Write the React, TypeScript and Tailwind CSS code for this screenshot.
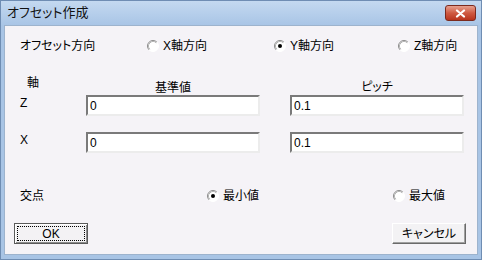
import React from 'react';

const jp = "font-['Liberation_Sans','Noto_Sans_CJK_JP',sans-serif] [font-feature-settings:'palt']";

function Radio({ checked = false }: { checked?: boolean }) {
    return (
        <svg width="12" height="12" viewBox="0 0 12 12" className="shrink-0">
            <circle cx="6" cy="6" r="5.5" fill="#ffffff" />
            <path d="M2.11 9.89 A5.5 5.5 0 0 1 9.89 2.11" fill="none" stroke="#8a8a8a" strokeWidth="1" />
            <path d="M9.89 2.11 A5.5 5.5 0 0 1 2.11 9.89" fill="none" stroke="#ffffff" strokeWidth="1" />
            <path d="M2.82 9.18 A4.5 4.5 0 0 1 9.18 2.82" fill="none" stroke="#b4b4b4" strokeWidth="1" />
            {checked && <circle cx="6" cy="6" r="2" fill="#000000" />}
        </svg>
    );
}

function RadioItem({ label, checked, className }: { label: string; checked?: boolean; className?: string }) {
    return (
        <div className={`flex items-center gap-[4px] ${className ?? ''}`}>
            <Radio checked={checked} />
            <span>{label}</span>
        </div>
    );
}

function TextBox({ value }: { value: string }) {
    return (
        <div className="h-[21px] bg-white border-2 border-t-[#7a7a7a] border-l-[#7a7a7a] border-r-[#ececec] border-b-[#ececec] flex items-center pl-[2px] text-[12px] font-['Liberation_Sans',sans-serif] text-black">
            {value}
        </div>
    );
}

export default function App() {
    return (
        <div className={`w-[482px] h-[260px] flex flex-col bg-[#a8c4e5] border border-[#6f8db3] text-black ${jp}`}>
            {/* title bar */}
            <div className="h-[24px] flex items-center justify-between pl-[6px] pr-[5px] bg-gradient-to-b from-[#c4d9f0] to-[#a9c5e6]">
                <span className="text-[13px] leading-[16px] text-[#111]">オフセット作成</span>
                <div className="w-[31px] h-[16px] rounded-[3px] border border-[#7b2a1e] bg-gradient-to-b from-[#e6a08f] via-[#cf5a42] to-[#b8331c] flex items-center justify-center">
                    <svg width="11" height="9" viewBox="0 0 11 9">
                        <path d="M2 1.5 L9 7.5 M9 1.5 L2 7.5" stroke="#ffffff" strokeWidth="2.2" strokeLinecap="round" />
                    </svg>
                </div>
            </div>

            {/* client */}
            <div className="mx-[3px] mb-[4px] flex-1 bg-[#f5f3f7] border border-[#9db3cd] px-[9px] flex flex-col text-[12px] leading-[16px]">
                <div className="mt-[12px] h-[16px] pl-[6px] flex items-center">
                    <span className="w-[127px]">オフセット方向</span>
                    <RadioItem label="X軸方向" className="w-[127px]" />
                    <RadioItem label="Y軸方向" checked className="w-[124px]" />
                    <RadioItem label="Z軸方向" />
                </div>

                <div className="mt-[25px] pl-[6px] grid grid-cols-[66px_174px_30px_174px]">
                    <div className="h-[14px] leading-[12px] pl-[7px] -mt-[2px]">軸</div>
                    <div className="h-[14px] leading-[18px] text-center">基準値</div>
                    <div />
                    <div className="h-[14px] leading-[16px] text-center">ピッチ</div>
                </div>

                <div className="mt-[2px] pl-[6px] grid grid-cols-[66px_174px_30px_174px] gap-y-[16px]">
                    <div className="h-[21px] leading-[14px] pt-[1px]">Z</div>
                    <TextBox value="0" />
                    <div />
                    <TextBox value="0.1" />
                    <div className="h-[21px] leading-[14px] pt-[1px]">X</div>
                    <TextBox value="0" />
                    <div />
                    <TextBox value="0.1" />
                </div>

                <div className="mt-[35px] h-[16px] pl-[6px] flex items-center">
                    <span className="w-[187px]">交点</span>
                    <RadioItem label="最小値" checked className="w-[186px]" />
                    <RadioItem label="最大値" />
                </div>

                <div className="mt-[19px] flex justify-between pr-[2px]">
                    <button className="w-[74px] h-[21px] border border-[#5a5a5a] bg-[#f3f2f4] p-[2px] shadow-[inset_1px_1px_0_#ffffff,inset_-1px_-1px_0_#8c8c8c]">
                        <div className="w-full h-full border border-dotted border-black flex items-center justify-center text-[12px] leading-[14px] font-['Liberation_Sans',sans-serif]">
                            OK
                        </div>
                    </button>
                    <button className="w-[74px] h-[21px] bg-[#f3f2f4] border border-t-[#ffffff] border-l-[#ffffff] border-r-[#6a6a6a] border-b-[#6a6a6a] shadow-[inset_-1px_-1px_0_#a0a0a0] flex items-center justify-center text-[12px] leading-[14px]">
                        キャンセル
                    </button>
                </div>
            </div>
        </div>
    );
}
